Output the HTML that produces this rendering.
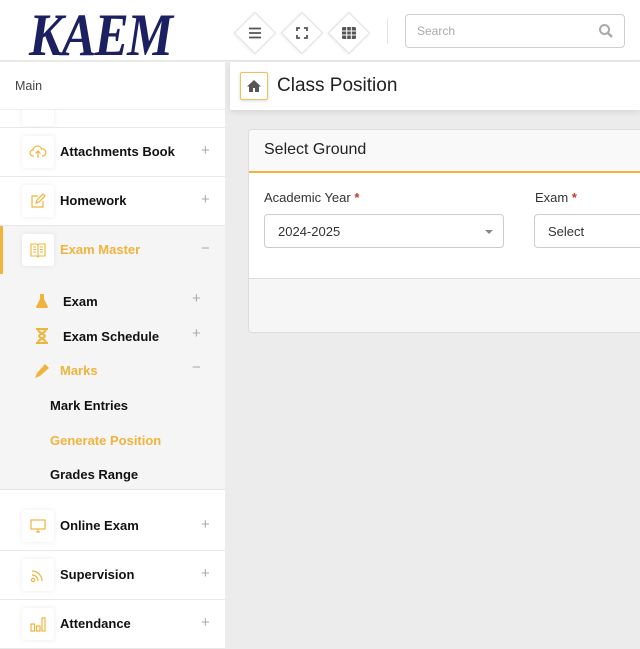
<!DOCTYPE html>
<html><head><meta charset="utf-8"><style>
*{box-sizing:border-box;margin:0;padding:0}
body{width:640px;height:640px;overflow:hidden;background:#ececec;font-family:"Liberation Sans",sans-serif;position:relative;color:#222}
.hdr{position:absolute;left:0;top:0;width:640px;height:61px;background:#fff;border-bottom:1px solid #e6e6e6}
.logo{position:absolute;left:29px;top:1px;font-family:"Liberation Serif",serif;font-style:italic;font-weight:bold;font-size:60px;color:#1b2060;letter-spacing:-2px;transform:scaleX(0.86);transform-origin:left}
.dia{position:absolute;top:18px;width:30px;height:30px;background:#fff;border:1px solid #e2e2e2;transform:rotate(45deg);box-shadow:0 1px 3px rgba(0,0,0,.08)}
.ic{position:absolute;top:19px;width:28px;height:28px}
.search{position:absolute;left:405px;top:14px;width:220px;height:34px;border:1px solid #cfcfcf;border-radius:4px;font-size:12px;color:#aaa;padding:9px 11px}
.side{position:absolute;left:0;top:62px;width:225px;height:578px;background:#fff}
.main{position:absolute;left:0;top:0;width:225px;height:48px;font-size:12.5px;color:#444;padding:17px 15px;border-bottom:1px solid #eee}
.item{position:absolute;left:0;width:225px;height:49px;border-bottom:1px solid #e8e8e8;background:#fff}
.box{position:absolute;left:22px;top:8px;width:32px;height:32px;background:#fff;border-radius:3px;box-shadow:0 0 6px rgba(0,0,0,.08)}
.box svg{position:absolute;left:7px;top:7px}
.lbl{position:absolute;left:60px;top:16px;font-size:13px;font-weight:bold;color:#111}
.pl{position:absolute;left:201px;top:14px;font-size:15px;color:#aaa}
.sub{position:absolute;left:0;top:274px;width:225px;height:216px;background:#f5f5f5;border-bottom:1px solid #e4e4e4}
.s{position:absolute;font-size:13px;font-weight:bold;color:#111}
.tb{position:absolute;left:230px;top:62px;width:410px;height:48px;background:#fff;box-shadow:0 2px 6px rgba(0,0,0,.1)}
.card{position:absolute;left:248px;top:129px;width:400px;height:204px;border:1px solid #ddd;border-radius:4px;background:#fff;overflow:hidden}
.ch{height:43px;background:#f9f9f9;border-bottom:2px solid #f0b43c;font-size:16px;padding:11px 15px;color:#222}
.lab{position:absolute;top:60px;font-size:13px;color:#333}
.lab b{color:#c0392b}
.sel{position:absolute;top:84px;height:34px;border:1px solid #ccc;border-radius:4px;font-size:13px;padding:9px 13px;color:#333}
.foot{position:absolute;left:0;top:148px;width:400px;height:56px;background:#f6f6f6;border-top:1px solid #ddd}
</style></head><body>
<div class="hdr">
<div class="logo">KAEM</div>
<div class="dia" style="left:240px"></div><div class="dia" style="left:287px"></div><div class="dia" style="left:334px"></div>
<svg class="ic" style="left:241px" viewBox="0 0 28 28"><path d="M8 9.5h12M8 14h12M8 18.5h12" stroke="#555" stroke-width="1.8"/></svg>
<svg class="ic" style="left:288px" viewBox="0 0 28 28"><path d="M9 12V9h3M16 9h3v3M19 16v3h-3M12 19H9v-3" stroke="#555" stroke-width="1.8" fill="none"/></svg>
<svg class="ic" style="left:335px" viewBox="0 0 28 28"><rect x="7" y="8" width="14" height="12" rx="1.5" fill="#555"/><path d="M7 12h14M7 16h14M11.7 8v12M16.3 8v12" stroke="#fff" stroke-width="1"/></svg>
<div style="position:absolute;left:387px;top:18px;width:1px;height:26px;background:#e5e5e5"></div>
<div class="search">Search<svg style="position:absolute;right:10px;top:8px" width="16" height="16" viewBox="0 0 16 16"><circle cx="6.5" cy="6.5" r="4.5" stroke="#aaa" stroke-width="2" fill="none"/><path d="M10 10l4 4" stroke="#aaa" stroke-width="2.4"/></svg></div>
</div>
<div class="side">
<div class="main">Main</div>
<div class="item" style="top:48px;height:18px;overflow:hidden"><div class="box" style="top:-16px"></div></div>
<div class="item" style="top:66px"><div class="box"><svg width="18" height="18" viewBox="0 0 18 18" fill="none" stroke="#f0b43c" stroke-width="1.2"><path d="M5 13H4a3 3 0 010-6 4.5 4.5 0 018.7-1A3 3 0 0114 13h-1M9 15V8M6.5 10.5L9 8l2.5 2.5"/></svg></div><div class="lbl">Attachments Book</div><div class="pl">+</div></div>
<div class="item" style="top:115px"><div class="box"><svg width="18" height="18" viewBox="0 0 18 18" fill="none" stroke="#f0b43c" stroke-width="1.2"><path d="M14 9v6H3V4h6M7 11l1-3 6-6 2 2-6 6z"/></svg></div><div class="lbl">Homework</div><div class="pl">+</div></div>
<div class="item" style="top:164px;background:#f5f5f5;border-left:3px solid #f0b43c"><div class="box" style="left:19px"><svg width="18" height="18" viewBox="0 0 18 18" fill="none" stroke="#f0b43c" stroke-width="1.1"><path d="M2 3h6l1 1 1-1h6v12h-6l-1 1-1-1H2zM9 4v11M4 6h3M4 8.5h3M4 11h3M11 6h3M11 8.5h3M11 11h3"/></svg></div><div class="lbl" style="left:57px;color:#f0b43c">Exam Master</div><div class="pl" style="left:198px">−</div></div>
</div>
<div class="sub" style="top:274px">
<svg style="position:absolute;left:35px;top:19px" width="14" height="16" viewBox="0 0 14 16"><path d="M4 1h6M5 1v5L1 14a1 1 0 001 1h10a1 1 0 001-1L9 6V1z" fill="#f0b43c"/></svg>
<div class="s" style="left:63px;top:20px">Exam</div><div class="pl" style="left:192px;top:16px">+</div>
<svg style="position:absolute;left:35px;top:54px" width="14" height="16" viewBox="0 0 14 16"><path d="M1 1h12M1 15h12M3 1c0 4 7 5 7 7s-7 3-7 7M11 1c0 4-7 5-7 7s7 3 7 7" stroke="#f0b43c" stroke-width="2" fill="none"/></svg>
<div class="s" style="left:63px;top:55px">Exam Schedule</div><div class="pl" style="left:192px;top:51px">+</div>
<svg style="position:absolute;left:34px;top:88px" width="17" height="17" viewBox="0 0 17 17"><path d="M1 16l2-5 8-9 4 4-9 8z" fill="#f0b43c"/></svg>
<div class="s" style="left:60px;top:89px;color:#f0b43c">Marks</div><div class="pl" style="left:192px;top:85px">−</div>
<div class="s" style="left:50px;top:124px">Mark Entries</div>
<div class="s" style="left:50px;top:159px;color:#f0b43c">Generate Position</div>
<div class="s" style="left:50px;top:193px">Grades Range</div>
</div>
<div class="side" style="top:502px;height:138px;background:#fff">
<div class="item" style="top:0"><div class="box"><svg width="18" height="18" viewBox="0 0 18 18" fill="none" stroke="#f0b43c" stroke-width="1.2"><rect x="2" y="3" width="14" height="9"/><path d="M7 15h4M9 12v3"/></svg></div><div class="lbl">Online Exam</div><div class="pl">+</div></div>
<div class="item" style="top:49px"><div class="box"><svg width="18" height="18" viewBox="0 0 18 18" fill="none" stroke="#f0b43c" stroke-width="1.2"><circle cx="4" cy="14" r="1.6"/><path d="M3 9a6 6 0 016 6M3 5a10 10 0 0110 10"/></svg></div><div class="lbl">Supervision</div><div class="pl">+</div></div>
<div class="item" style="top:98px"><div class="box"><svg width="18" height="18" viewBox="0 0 18 18" fill="none" stroke="#f0b43c" stroke-width="1.2"><rect x="2" y="9" width="3.5" height="7"/><rect x="7.5" y="11" width="3.5" height="5"/><rect x="13" y="3" width="3" height="13"/></svg></div><div class="lbl">Attendance</div><div class="pl">+</div></div>
</div>
<div class="tb">
<div style="position:absolute;left:10px;top:10px;width:28px;height:28px;border:1px solid #f0c060;border-radius:2px;background:#fff;box-shadow:0 1px 3px rgba(0,0,0,.15)"><svg style="position:absolute;left:5px;top:5px" width="16" height="16" viewBox="0 0 16 16"><path d="M8 2L1 8.5h2V14h4v-4h2v4h4V8.5h2z" fill="#555"/></svg></div>
<div style="position:absolute;left:47px;top:13px;font-size:19px;color:#222">Class Position</div>
</div>
<div class="card">
<div class="ch">Select Ground</div>
<div class="lab" style="left:15px">Academic Year <b>*</b></div>
<div class="sel" style="left:15px;width:240px">2024-2025<span style="position:absolute;right:10px;top:15px;border:4px solid transparent;border-top:4px solid #888"></span></div>
<div class="lab" style="left:286px">Exam <b>*</b></div>
<div class="sel" style="left:285px;width:140px">Select</div>
<div class="foot"></div>
</div>
</body></html>
